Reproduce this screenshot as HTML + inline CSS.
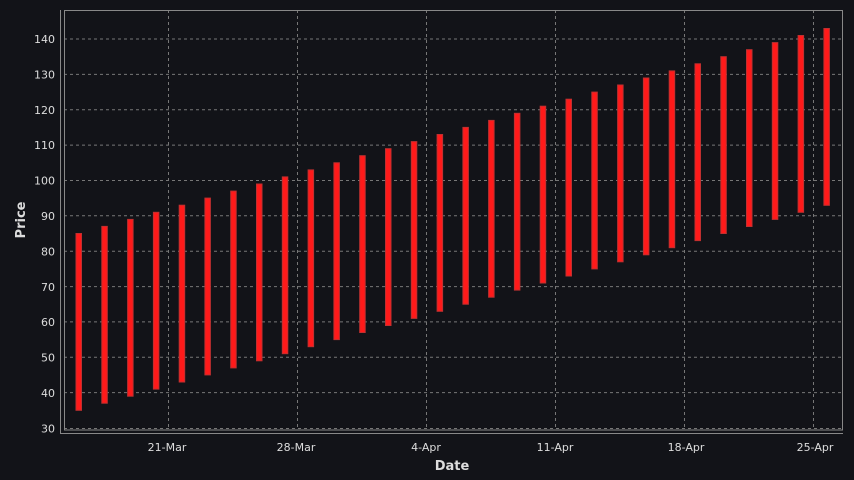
<!DOCTYPE html>
<html><head><meta charset="utf-8"><style>
html,body{margin:0;padding:0;background:#121318;}
svg{display:block;font-family:"DejaVu Sans","Liberation Sans",sans-serif;}
</style></head><body>
<svg width="854" height="480" viewBox="0 0 854 480">
<rect width="854" height="480" fill="#121318"/>
<g stroke="#777" stroke-width="1" stroke-dasharray="3,3" fill="none">
<line x1="64" x2="842" y1="428.5" y2="428.5"/>
<line x1="64" x2="842" y1="392.6" y2="392.6"/>
<line x1="64" x2="842" y1="357.3" y2="357.3"/>
<line x1="64" x2="842" y1="321.9" y2="321.9"/>
<line x1="64" x2="842" y1="286.6" y2="286.6"/>
<line x1="64" x2="842" y1="251.2" y2="251.2"/>
<line x1="64" x2="842" y1="215.8" y2="215.8"/>
<line x1="64" x2="842" y1="180.5" y2="180.5"/>
<line x1="64" x2="842" y1="145.1" y2="145.1"/>
<line x1="64" x2="842" y1="109.8" y2="109.8"/>
<line x1="64" x2="842" y1="74.4" y2="74.4"/>
<line x1="64" x2="842" y1="39" y2="39"/>
<line x1="168.5" x2="168.5" y1="10" y2="430"/>
<line x1="297.5" x2="297.5" y1="10" y2="430"/>
<line x1="426.5" x2="426.5" y1="10" y2="430"/>
<line x1="555.5" x2="555.5" y1="10" y2="430"/>
<line x1="684.5" x2="684.5" y1="10" y2="430"/>
<line x1="813.5" x2="813.5" y1="10" y2="430"/>
</g>
<rect x="64.5" y="10.5" width="778" height="419.5" fill="none" stroke="#888" stroke-width="1"/>
<line x1="60.5" x2="60.5" y1="10" y2="433" stroke="#888"/>
<line x1="60" x2="843" y1="433.5" y2="433.5" stroke="#888"/>
<g fill="#ff1a1a" stroke="#c03030" stroke-width="1">
<rect x="76" y="233.5" width="5.5" height="176.8"/>
<rect x="101.8" y="226.4" width="5.5" height="176.8"/>
<rect x="127.6" y="219.4" width="5.5" height="176.8"/>
<rect x="153.4" y="212.3" width="5.5" height="176.8"/>
<rect x="179.2" y="205.2" width="5.5" height="176.8"/>
<rect x="204.9" y="198.1" width="5.5" height="176.8"/>
<rect x="230.7" y="191.1" width="5.5" height="176.8"/>
<rect x="256.5" y="184.0" width="5.5" height="176.8"/>
<rect x="282.3" y="176.9" width="5.5" height="176.8"/>
<rect x="308.1" y="169.9" width="5.5" height="176.8"/>
<rect x="333.9" y="162.8" width="5.5" height="176.8"/>
<rect x="359.7" y="155.7" width="5.5" height="176.8"/>
<rect x="385.5" y="148.7" width="5.5" height="176.8"/>
<rect x="411.3" y="141.6" width="5.5" height="176.8"/>
<rect x="437.1" y="134.5" width="5.5" height="176.8"/>
<rect x="462.9" y="127.4" width="5.5" height="176.8"/>
<rect x="488.6" y="120.4" width="5.5" height="176.8"/>
<rect x="514.4" y="113.3" width="5.5" height="176.8"/>
<rect x="540.2" y="106.2" width="5.5" height="176.8"/>
<rect x="566.0" y="99.2" width="5.5" height="176.8"/>
<rect x="591.8" y="92.1" width="5.5" height="176.8"/>
<rect x="617.6" y="85.0" width="5.5" height="176.8"/>
<rect x="643.4" y="78.0" width="5.5" height="176.8"/>
<rect x="669.2" y="70.9" width="5.5" height="176.8"/>
<rect x="695.0" y="63.8" width="5.5" height="176.8"/>
<rect x="720.8" y="56.7" width="5.5" height="176.8"/>
<rect x="746.5" y="49.7" width="5.5" height="176.8"/>
<rect x="772.3" y="42.6" width="5.5" height="176.8"/>
<rect x="798.1" y="35.5" width="5.5" height="176.8"/>
<rect x="823.9" y="28.5" width="5.5" height="176.8"/>
</g>
<g fill="#dddddd" font-size="11" text-anchor="end">
<text x="55" y="432.5">30</text>
<text x="55" y="397">40</text>
<text x="55" y="361.5">50</text>
<text x="55" y="326">60</text>
<text x="55" y="291">70</text>
<text x="55" y="255.5">80</text>
<text x="55" y="220">90</text>
<text x="55" y="184.5">100</text>
<text x="55" y="149">110</text>
<text x="55" y="114">120</text>
<text x="55" y="78.5">130</text>
<text x="55" y="43">140</text>
</g>
<g fill="#dddddd" font-size="11" text-anchor="middle">
<text x="167" y="451">21-Mar</text>
<text x="296" y="451">28-Mar</text>
<text x="426" y="451">4-Apr</text>
<text x="555" y="451">11-Apr</text>
<text x="686" y="451">18-Apr</text>
<text x="815" y="451">25-Apr</text>
</g>
<text x="452" y="470" fill="#dddddd" font-size="13" font-weight="bold" text-anchor="middle">Date</text>
<text transform="translate(25,220) rotate(-90)" fill="#dddddd" font-size="13" font-weight="bold" text-anchor="middle">Price</text>
</svg>
</body></html>
